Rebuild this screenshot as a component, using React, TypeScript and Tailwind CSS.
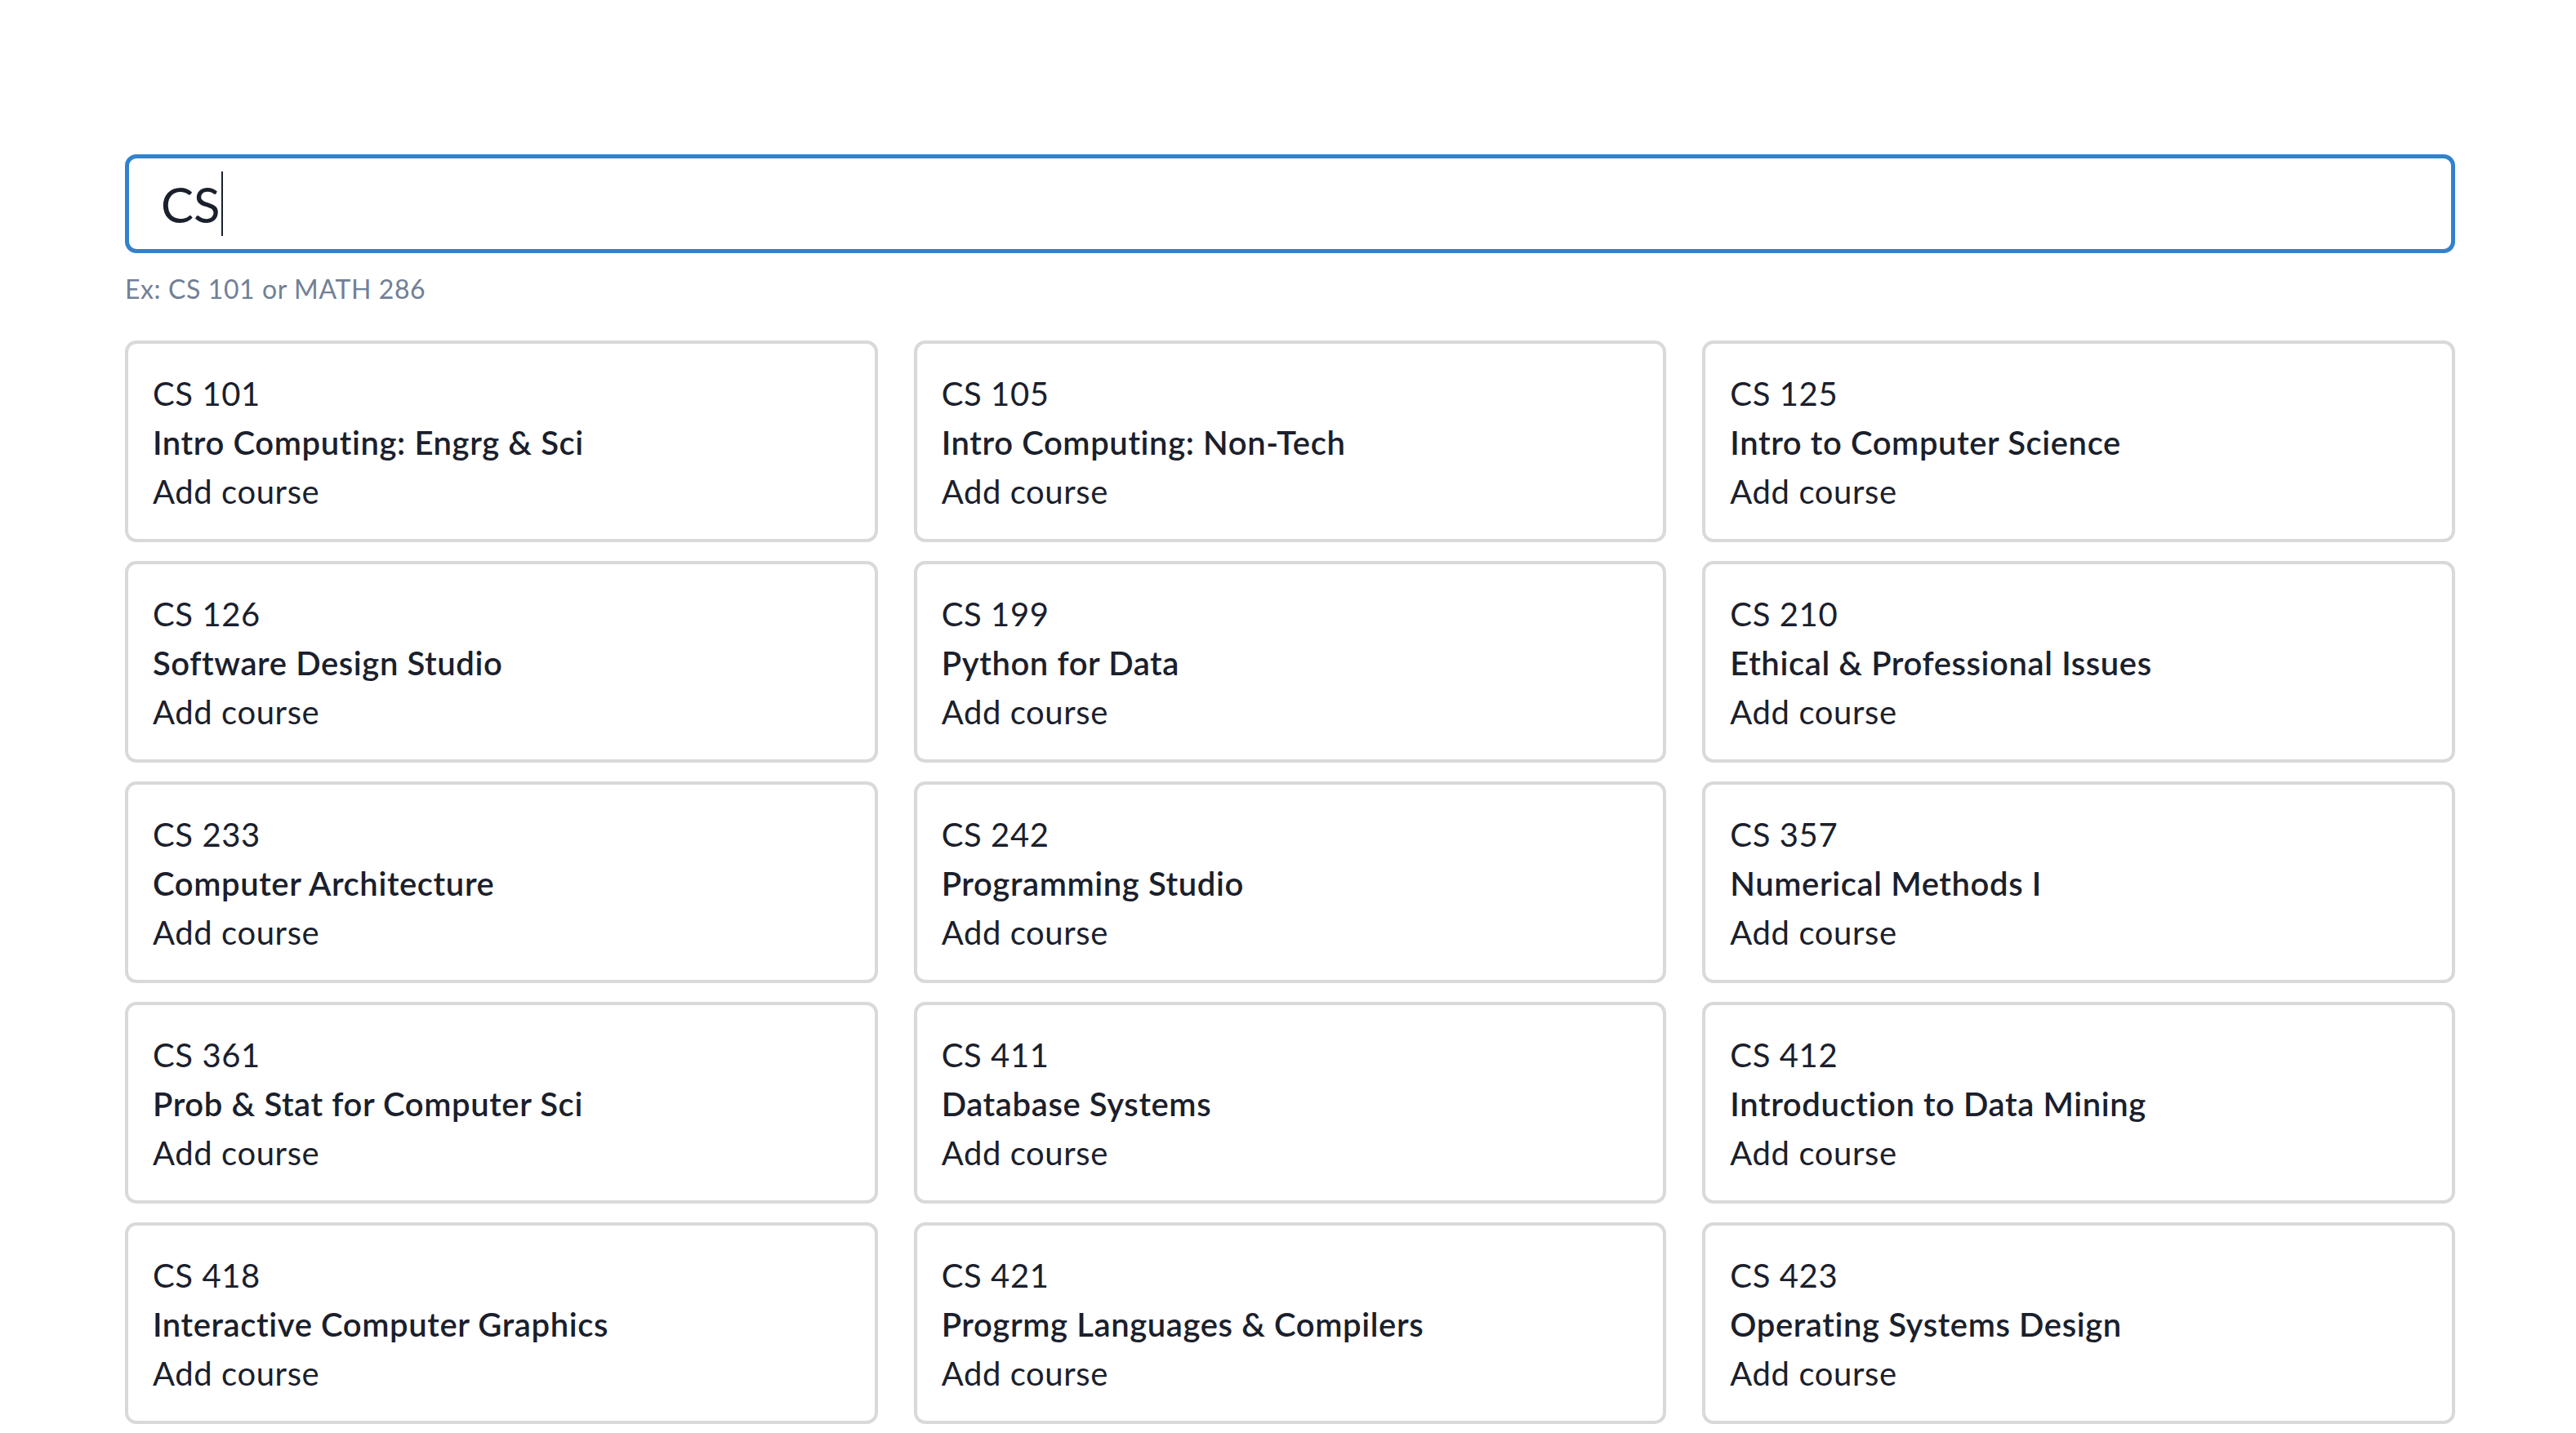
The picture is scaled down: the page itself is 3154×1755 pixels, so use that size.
import React from "react";

type Course = { code: string; title: string };

const courses: Course[] = [
  { code: "CS 101", title: "Intro Computing: Engrg & Sci" },
  { code: "CS 105", title: "Intro Computing: Non-Tech" },
  { code: "CS 125", title: "Intro to Computer Science" },
  { code: "CS 126", title: "Software Design Studio" },
  { code: "CS 199", title: "Python for Data" },
  { code: "CS 210", title: "Ethical & Professional Issues" },
  { code: "CS 233", title: "Computer Architecture" },
  { code: "CS 242", title: "Programming Studio" },
  { code: "CS 357", title: "Numerical Methods I" },
  { code: "CS 361", title: "Prob & Stat for Computer Sci" },
  { code: "CS 411", title: "Database Systems" },
  { code: "CS 412", title: "Introduction to Data Mining" },
  { code: "CS 418", title: "Interactive Computer Graphics" },
  { code: "CS 421", title: "Progrmg Languages & Compilers" },
  { code: "CS 423", title: "Operating Systems Design" },
];

function CourseCard({ course }: { course: Course }) {
  return (
    <div className="rounded-[14px] border-[4px] border-[#d9d9d9] bg-white px-[30px] pt-[31px] pb-[28px] text-[40px] leading-[60px] tracking-[0.6px] text-[#1a202c]">
      <div>{course.code}</div>
      <div className="font-semibold">{course.title}</div>
      <div>Add course</div>
    </div>
  );
}

export default function App() {
  return (
    <div
      className="min-h-screen bg-white"
      style={{ fontFamily: "Lato, 'Open Sans', sans-serif" }}
    >
      <div className="ml-[153px] w-[2853px] pt-[189px]">
        <div className="flex h-[121px] items-center rounded-[14px] border-[5px] border-[#3182ce] bg-white pl-[39px]">
          <span className="text-[60px] leading-none text-[#1a202c]">CS</span>
          <span className="ml-[1px] h-[79px] w-[2px] bg-[#1a202c]" />
        </div>
        <p className="mt-[20px] text-[32px] leading-[48px] tracking-[0.6px] text-[#718096]">
          Ex: CS 101 or MATH 286
        </p>

        <div className="mt-[39px] grid grid-cols-3 gap-x-[44px] gap-y-[23px]">
          {courses.map((c) => (
            <CourseCard key={c.code} course={c} />
          ))}
        </div>
      </div>
    </div>
  );
}
